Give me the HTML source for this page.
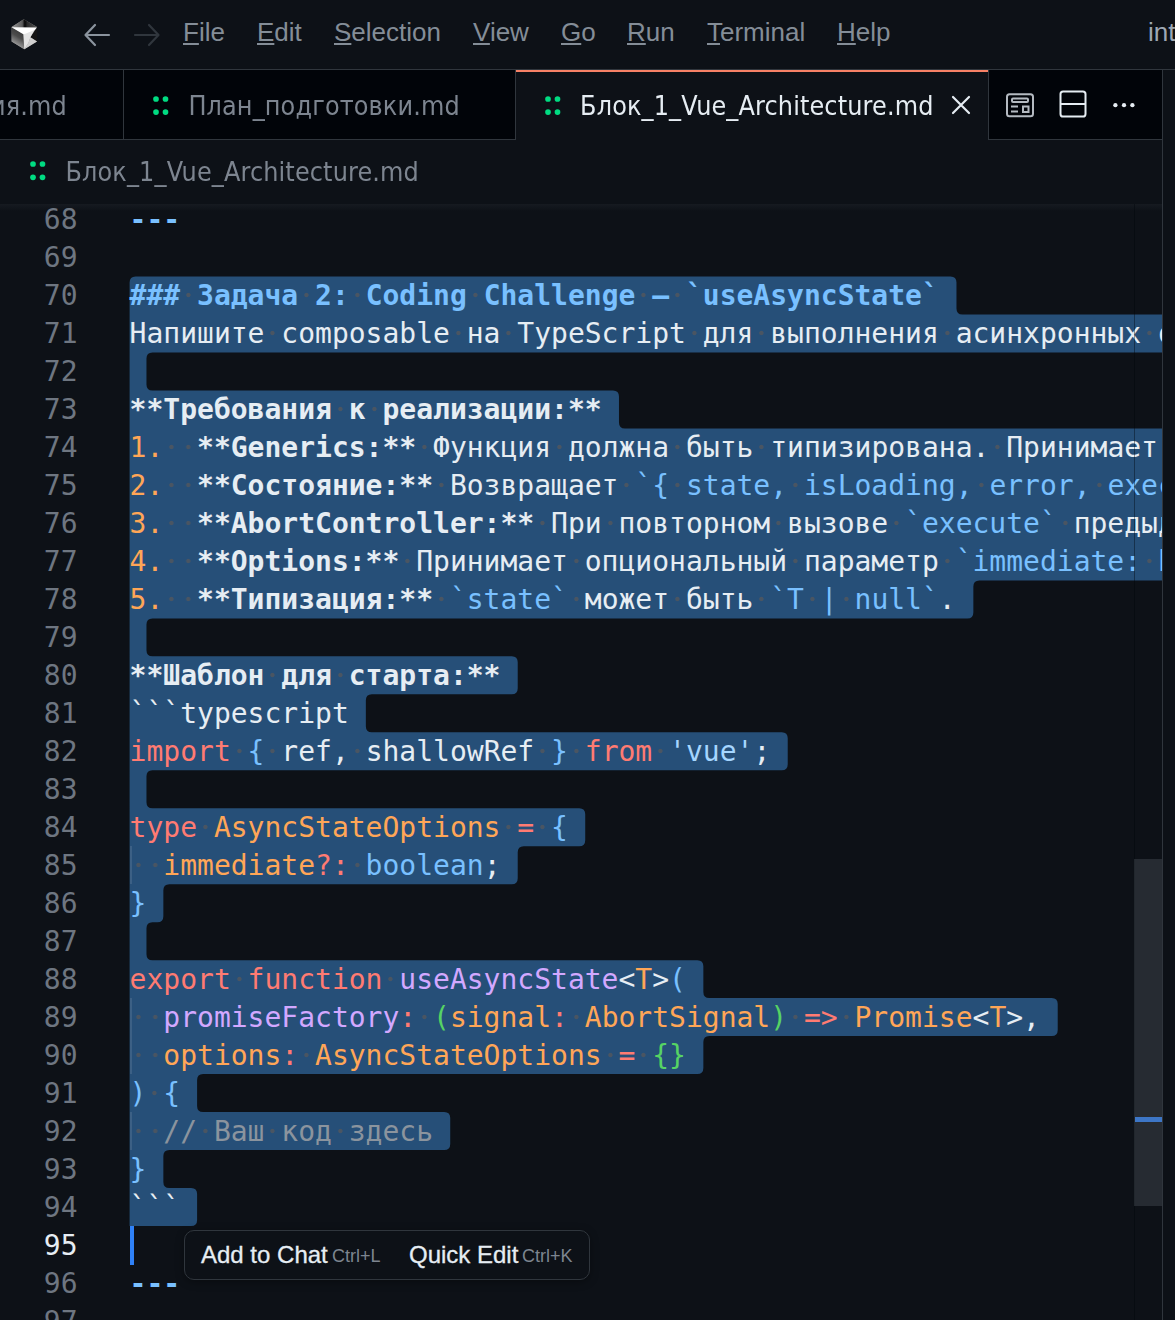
<!DOCTYPE html>
<html lang="ru">
<head>
<meta charset="utf-8">
<title>Блок_1_Vue_Architecture.md</title>
<style>
html,body{margin:0;padding:0;background:#0d1117;}
body{width:1175px;height:1320px;overflow:hidden;position:relative;font-family:"Liberation Sans",sans-serif;color:#e6edf3;}
.abs{position:absolute;}
#title{left:0;top:0;width:1175px;height:69px;background:#0d1117;border-bottom:1px solid #30363d;}
.menu{position:absolute;top:15px;font-size:26px;line-height:34px;color:#848d97;white-space:nowrap;}
.menu u{text-decoration-thickness:1.5px;text-underline-offset:1.5px;}
#tabs{left:0;top:70px;width:1162px;height:69px;background:#010409;border-bottom:1px solid #30363d;}
.tab{position:absolute;top:0;height:69px;border-right:1px solid #30363d;box-sizing:content-box;}
.tabtxt{position:absolute;top:19.5px;letter-spacing:0.125px;transform:scaleY(1.07);transform-origin:0 25.3px;font-family:"DejaVu Sans","Liberation Sans",sans-serif;font-size:24px;line-height:34px;white-space:nowrap;color:#7d8590;}
.dots{position:absolute;width:20px;height:24px;}
#crumbs{left:0;top:140px;width:1162px;height:64px;background:#0d1117;}
#editor{left:0;top:204px;width:1162px;height:1116px;background:#0d1117;overflow:hidden;}
#lines{position:absolute;left:0;top:-204px;width:1400px;height:1400px;}
.ln,.cl{position:absolute;height:38px;line-height:38px;font-family:"DejaVu Sans Mono","Liberation Mono",monospace;font-size:28px;white-space:pre;}
.ln{left:0;width:77.5px;text-align:right;color:#6e7681;}
.ln.act{color:#e6edf3;}
.cl{left:129.6px;color:#e6edf3;}
.b{font-weight:bold;}
.ws{background:radial-gradient(circle closest-side,#4a5562 0,#4a5562 1.7px,rgba(74,85,98,0) 2.6px) 0 calc(50% - .4px)/16.859375px 8px repeat-x;}
.ig{position:absolute;left:129.7px;width:2.2px;background:rgba(255,255,255,.1);}
#right{left:1162px;top:70px;width:13px;height:1250px;background:#0d1117;border-left:1px solid #30363d;box-sizing:border-box;}
#widget{left:184px;top:1230px;width:406px;height:50px;box-sizing:border-box;border:1px solid #30363d;border-radius:10px;background:#0d1117;box-shadow:0 2px 8px rgba(0,0,0,.35);}
#widget span{position:absolute;white-space:nowrap;}
.wa{font-size:24px;line-height:28px;top:10px;color:#e6edf3;-webkit-text-stroke:0.3px #e6edf3;}
.wk{font-size:18px;line-height:22px;top:14px;color:#7d8590;}
</style>
</head>
<body>
<div id="title" class="abs">
  <svg class="abs" style="left:5px;top:12px;filter:blur(.35px)" width="40" height="44" viewBox="0 0 40 44">
    <defs>
      <linearGradient id="lgT" x1="0" y1="0" x2="1" y2="0"><stop offset="0" stop-color="#9a9a9a"/><stop offset=".42" stop-color="#5a5a5a"/><stop offset=".52" stop-color="#050505"/><stop offset=".62" stop-color="#2a2a2a"/><stop offset="1" stop-color="#555"/></linearGradient>
      <linearGradient id="lgL" x1=".7" y1="0" x2=".35" y2="1"><stop offset="0" stop-color="#333"/><stop offset=".45" stop-color="#4c4c4c"/><stop offset=".75" stop-color="#8a8a8a"/><stop offset="1" stop-color="#d0d0d0"/></linearGradient>
    </defs>
    <polygon points="18.72,7.32 32.00,14.98 32.00,29.45 19.30,37.28 6.64,29.45 6.64,14.98" fill="#8c8c8c"/>
    <polygon points="18.72,7.32 32.00,14.98 31.66,16.00 6.98,15.66 6.64,14.98" fill="url(#lgT)"/>
    <polygon points="6.64,15.15 18.55,21.96 19.30,37.28 6.64,29.45" fill="url(#lgL)"/>
    <polygon points="32.00,14.98 32.00,29.45 25.36,25.36" fill="#141414"/>
    <polygon points="32.00,29.45 19.30,37.28 23.49,30.64 25.36,25.36" fill="#cfcfcf"/>
    <polygon points="18.38,21.79 20.77,20.43 30.64,16.34 25.36,25.36 23.49,30.64 19.30,37.28" fill="#e4e4e4"/>
    <polygon points="6.64,15.15 31.83,15.49 29.96,17.70 20.43,21.79 18.38,22.13" fill="#ffffff"/>
  </svg>
  <svg class="abs" style="left:82px;top:22px" width="30" height="26" viewBox="0 0 30 26" fill="none" stroke="#8b949e" stroke-width="2.2" stroke-linecap="round" stroke-linejoin="round"><path d="M27 13H4M13 3L3.5 13L13 23"/></svg>
  <svg class="abs" style="left:132px;top:22px" width="30" height="26" viewBox="0 0 30 26" fill="none" stroke="#30363d" stroke-width="2.2" stroke-linecap="round" stroke-linejoin="round"><path d="M3 13H26M17 3L26.5 13L17 23"/></svg>
  <div class="menu" style="left:183px"><u>F</u>ile</div>
  <div class="menu" style="left:257px"><u>E</u>dit</div>
  <div class="menu" style="left:334px"><u>S</u>election</div>
  <div class="menu" style="left:473px"><u>V</u>iew</div>
  <div class="menu" style="left:561px"><u>G</u>o</div>
  <div class="menu" style="left:627px"><u>R</u>un</div>
  <div class="menu" style="left:707px"><u>T</u>erminal</div>
  <div class="menu" style="left:837px"><u>H</u>elp</div>
  <div class="menu" style="left:1148px;color:#9da7b3">interview</div>
</div>

<div id="tabs" class="abs">
  <div class="tab" style="left:0;width:123px"><div class="tabtxt" style="left:-10px">ия.md</div></div>
  <div class="tab" style="left:124px;width:391px">
    <svg class="dots" style="left:27.5px;top:25.1px" viewBox="0 0 20 24" fill="#00dc82"><circle cx="4" cy="4" r="2.85"/><circle cx="13.5" cy="4" r="2.85"/><circle cx="4" cy="17.1" r="2.85"/><circle cx="13.5" cy="17.1" r="2.85"/></svg>
    <div class="tabtxt" style="left:64.4px">План_подготовки.md</div>
  </div>
  <div class="tab" style="left:516px;width:472px;height:70px;background:#0d1117;box-shadow:inset 0 2px 0 #f78166">
    <svg class="dots" style="left:27.7px;top:25.1px" viewBox="0 0 20 24" fill="#00dc82"><circle cx="4" cy="4" r="2.85"/><circle cx="13.5" cy="4" r="2.85"/><circle cx="4" cy="17.1" r="2.85"/><circle cx="13.5" cy="17.1" r="2.85"/></svg>
    <div class="tabtxt" style="left:64.1px;color:#e6edf3">Блок_1_Vue_Architecture.md</div>
    <svg class="abs" style="left:434px;top:24px" width="22" height="22" viewBox="0 0 22 22" fill="none" stroke="#e6edf3" stroke-width="2.2" stroke-linecap="round"><path d="M3 3L19 19M19 3L3 19"/></svg>
  </div>
  <!-- editor actions -->
  <svg class="abs" style="left:1005px;top:21px" width="30" height="28" viewBox="0 0 30 28" fill="none" stroke="#b4bac1" stroke-width="2"><rect x="2" y="3.2" width="26" height="22" rx="2.5"/><rect x="7" y="7.5" width="16" height="3.5" rx="1"/><path d="M6 15.5h7M6 20.5h7"/><rect x="18" y="15.5" width="5.5" height="5.5"/></svg>
  <svg class="abs" style="left:1058px;top:19px" width="30" height="30" viewBox="0 0 30 30" fill="none" stroke="#e6edf3" stroke-width="2"><rect x="2.5" y="2.5" width="25" height="25" rx="2.6"/><path d="M2.5 15h25"/></svg>
  <svg class="abs" style="left:1110px;top:30px" width="28" height="10" viewBox="0 0 28 10" fill="#e6edf3"><circle cx="5.4" cy="5.2" r="2.15"/><circle cx="14" cy="5.2" r="2.15"/><circle cx="22.4" cy="5.2" r="2.15"/></svg>
</div>

<div id="crumbs" class="abs">
  <svg class="dots" style="left:29.2px;top:20.4px" viewBox="0 0 20 24" fill="#00dc82"><circle cx="4" cy="4" r="2.85"/><circle cx="13.5" cy="4" r="2.85"/><circle cx="4" cy="17.3" r="2.85"/><circle cx="13.5" cy="17.3" r="2.85"/></svg>
  <div class="tabtxt" style="left:65.5px;top:15.7px">Блок_1_Vue_Architecture.md</div>
</div>

<div id="editor" class="abs">
  <div id="lines">
    <svg class="abs" style="left:0;top:0" width="1400" height="1400"><path d="M129.60 282.60 Q129.60 276.60 135.60 276.60 L950.48 276.60 Q956.48 276.60 956.48 282.60 L956.48 308.58 Q956.48 314.58 962.48 314.58 L1304.85 314.58 Q1310.85 314.58 1310.85 320.58 L1310.85 346.55 Q1310.85 352.55 1304.85 352.55 L152.47 352.55 Q146.47 352.55 146.47 358.55 L146.47 384.53 Q146.47 390.53 152.47 390.53 L612.98 390.53 Q618.98 390.53 618.98 396.53 L618.98 422.50 Q618.98 428.50 624.98 428.50 L1304.85 428.50 Q1310.85 428.50 1310.85 434.50 L1310.85 460.48 Q1310.85 466.48 1304.85 466.48 L1299.97 466.48 Q1293.97 466.48 1293.97 472.48 L1293.97 498.45 Q1293.97 504.45 1287.97 504.45 L1266.22 504.45 Q1260.22 504.45 1260.22 510.45 L1260.22 536.42 Q1260.22 542.42 1266.22 542.42 L1304.85 542.42 Q1310.85 542.42 1310.85 548.42 L1310.85 574.40 Q1310.85 580.40 1304.85 580.40 L979.35 580.40 Q973.35 580.40 973.35 586.40 L973.35 612.38 Q973.35 618.38 967.35 618.38 L152.47 618.38 Q146.47 618.38 146.47 624.38 L146.47 650.35 Q146.47 656.35 152.47 656.35 L511.73 656.35 Q517.73 656.35 517.73 662.35 L517.73 688.33 Q517.73 694.33 511.73 694.33 L371.85 694.33 Q365.85 694.33 365.85 700.33 L365.85 726.30 Q365.85 732.30 371.85 732.30 L781.73 732.30 Q787.73 732.30 787.73 738.30 L787.73 764.28 Q787.73 770.28 781.73 770.28 L152.47 770.28 Q146.47 770.28 146.47 776.28 L146.47 802.25 Q146.47 808.25 152.47 808.25 L579.23 808.25 Q585.23 808.25 585.23 814.25 L585.23 840.23 Q585.23 846.23 579.23 846.23 L523.73 846.23 Q517.73 846.23 517.73 852.23 L517.73 878.20 Q517.73 884.20 511.73 884.20 L169.35 884.20 Q163.35 884.20 163.35 890.20 L163.35 916.18 Q163.35 922.18 157.35 922.18 L152.47 922.18 Q146.47 922.18 146.47 928.18 L146.47 954.15 Q146.47 960.15 152.47 960.15 L697.35 960.15 Q703.35 960.15 703.35 966.15 L703.35 992.12 Q703.35 998.12 709.35 998.12 L1051.72 998.12 Q1057.72 998.12 1057.72 1004.12 L1057.72 1030.10 Q1057.72 1036.10 1051.72 1036.10 L709.35 1036.10 Q703.35 1036.10 703.35 1042.10 L703.35 1068.08 Q703.35 1074.08 697.35 1074.08 L203.10 1074.08 Q197.10 1074.08 197.10 1080.08 L197.10 1106.05 Q197.10 1112.05 203.10 1112.05 L444.23 1112.05 Q450.23 1112.05 450.23 1118.05 L450.23 1144.03 Q450.23 1150.03 444.23 1150.03 L169.35 1150.03 Q163.35 1150.03 163.35 1156.03 L163.35 1182.00 Q163.35 1188.00 169.35 1188.00 L191.10 1188.00 Q197.10 1188.00 197.10 1194.00 L197.10 1219.97 Q197.10 1225.97 191.10 1225.97 L129.60 1225.97 Z" fill="#264f78"/></svg>
<div class="ln" style="top:201.0px">68</div>
<div class="cl" style="top:201.0px"><span class="b" style="color:#79c0ff">---</span></div>
<div class="ln" style="top:239.0px">69</div>
<div class="ln" style="top:277.0px">70</div>
<div class="cl" style="top:277.0px"><span class="b" style="color:#79c0ff">###</span><span class="ws"> </span><span class="b" style="color:#79c0ff">Задача</span><span class="ws"> </span><span class="b" style="color:#79c0ff">2:</span><span class="ws"> </span><span class="b" style="color:#79c0ff">Coding</span><span class="ws"> </span><span class="b" style="color:#79c0ff">Challenge</span><span class="ws"> </span><span class="b" style="color:#79c0ff">—</span><span class="ws"> </span><span class="b" style="color:#79c0ff">`useAsyncState`</span></div>
<div class="ln" style="top:315.0px">71</div>
<div class="cl" style="top:315.0px">Напишите<span class="ws"> </span>composable<span class="ws"> </span>на<span class="ws"> </span>TypeScript<span class="ws"> </span>для<span class="ws"> </span>выполнения<span class="ws"> </span>асинхронных<span class="ws"> </span>операций</div>
<div class="ln" style="top:353.0px">72</div>
<div class="ln" style="top:391.0px">73</div>
<div class="cl" style="top:391.0px"><span class="b">**Требования</span><span class="ws"> </span><span class="b">к</span><span class="ws"> </span><span class="b">реализации:**</span></div>
<div class="ln" style="top:429.0px">74</div>
<div class="cl" style="top:429.0px"><span style="color:#ffa657">1.</span><span class="ws">  </span><span class="b">**Generics:**</span><span class="ws"> </span>Функция<span class="ws"> </span>должна<span class="ws"> </span>быть<span class="ws"> </span>типизирована.<span class="ws"> </span>Принимает<span class="ws"> </span>функцию</div>
<div class="ln" style="top:467.0px">75</div>
<div class="cl" style="top:467.0px"><span style="color:#ffa657">2.</span><span class="ws">  </span><span class="b">**Состояние:**</span><span class="ws"> </span>Возвращает<span class="ws"> </span><span style="color:#79c0ff">`{</span><span class="ws"> </span><span style="color:#79c0ff">state,</span><span class="ws"> </span><span style="color:#79c0ff">isLoading,</span><span class="ws"> </span><span style="color:#79c0ff">error,</span><span class="ws"> </span><span style="color:#79c0ff">execute</span><span class="ws"> </span><span style="color:#79c0ff">}`</span></div>
<div class="ln" style="top:505.0px">76</div>
<div class="cl" style="top:505.0px"><span style="color:#ffa657">3.</span><span class="ws">  </span><span class="b">**AbortController:**</span><span class="ws"> </span>При<span class="ws"> </span>повторном<span class="ws"> </span>вызове<span class="ws"> </span><span style="color:#79c0ff">`execute`</span><span class="ws"> </span>предыдущий</div>
<div class="ln" style="top:543.0px">77</div>
<div class="cl" style="top:543.0px"><span style="color:#ffa657">4.</span><span class="ws">  </span><span class="b">**Options:**</span><span class="ws"> </span>Принимает<span class="ws"> </span>опциональный<span class="ws"> </span>параметр<span class="ws"> </span><span style="color:#79c0ff">`immediate:</span><span class="ws"> </span><span style="color:#79c0ff">boolean`</span></div>
<div class="ln" style="top:581.0px">78</div>
<div class="cl" style="top:581.0px"><span style="color:#ffa657">5.</span><span class="ws">  </span><span class="b">**Типизация:**</span><span class="ws"> </span><span style="color:#79c0ff">`state`</span><span class="ws"> </span>может<span class="ws"> </span>быть<span class="ws"> </span><span style="color:#79c0ff">`T</span><span class="ws"> </span><span style="color:#79c0ff">|</span><span class="ws"> </span><span style="color:#79c0ff">null`</span>.</div>
<div class="ln" style="top:619.0px">79</div>
<div class="ln" style="top:657.0px">80</div>
<div class="cl" style="top:657.0px"><span class="b">**Шаблон</span><span class="ws"> </span><span class="b">для</span><span class="ws"> </span><span class="b">старта:**</span></div>
<div class="ln" style="top:695.0px">81</div>
<div class="cl" style="top:695.0px">```typescript</div>
<div class="ln" style="top:733.0px">82</div>
<div class="cl" style="top:733.0px"><span style="color:#ff7b72">import</span><span class="ws"> </span><span style="color:#79c0ff">{</span><span class="ws"> </span>ref,<span class="ws"> </span>shallowRef<span class="ws"> </span><span style="color:#79c0ff">}</span><span class="ws"> </span><span style="color:#ff7b72">from</span><span class="ws"> </span><span style="color:#a5d6ff">'vue'</span>;</div>
<div class="ln" style="top:771.0px">83</div>
<div class="ln" style="top:809.0px">84</div>
<div class="cl" style="top:809.0px"><span style="color:#ff7b72">type</span><span class="ws"> </span><span style="color:#ffa657">AsyncStateOptions</span><span class="ws"> </span><span style="color:#ff7b72">=</span><span class="ws"> </span><span style="color:#79c0ff">{</span></div>
<div class="ln" style="top:847.0px">85</div>
<div class="cl" style="top:847.0px"><span class="ws">  </span><span style="color:#ffa657">immediate</span><span style="color:#ff7b72">?:</span><span class="ws"> </span><span style="color:#79c0ff">boolean</span>;</div>
<div class="ln" style="top:885.0px">86</div>
<div class="cl" style="top:885.0px"><span style="color:#79c0ff">}</span></div>
<div class="ln" style="top:923.0px">87</div>
<div class="ln" style="top:961.0px">88</div>
<div class="cl" style="top:961.0px"><span style="color:#ff7b72">export</span><span class="ws"> </span><span style="color:#ff7b72">function</span><span class="ws"> </span><span style="color:#d2a8ff">useAsyncState</span>&lt;<span style="color:#ffa657">T</span>&gt;<span style="color:#79c0ff">(</span></div>
<div class="ln" style="top:999.0px">89</div>
<div class="cl" style="top:999.0px"><span class="ws">  </span><span style="color:#d2a8ff">promiseFactory</span><span style="color:#ff7b72">:</span><span class="ws"> </span><span style="color:#56d364">(</span><span style="color:#ffa657">signal</span><span style="color:#ff7b72">:</span><span class="ws"> </span><span style="color:#ffa657">AbortSignal</span><span style="color:#56d364">)</span><span class="ws"> </span><span style="color:#ff7b72">=&gt;</span><span class="ws"> </span><span style="color:#ffa657">Promise</span>&lt;<span style="color:#ffa657">T</span>&gt;,</div>
<div class="ln" style="top:1037.0px">90</div>
<div class="cl" style="top:1037.0px"><span class="ws">  </span><span style="color:#ffa657">options</span><span style="color:#ff7b72">:</span><span class="ws"> </span><span style="color:#ffa657">AsyncStateOptions</span><span class="ws"> </span><span style="color:#ff7b72">=</span><span class="ws"> </span><span style="color:#56d364">{}</span></div>
<div class="ln" style="top:1075.0px">91</div>
<div class="cl" style="top:1075.0px"><span style="color:#79c0ff">)</span><span class="ws"> </span><span style="color:#79c0ff">{</span></div>
<div class="ln" style="top:1113.0px">92</div>
<div class="cl" style="top:1113.0px"><span class="ws">  </span><span style="color:#8b949e">//</span><span class="ws"> </span><span style="color:#8b949e">Ваш</span><span class="ws"> </span><span style="color:#8b949e">код</span><span class="ws"> </span><span style="color:#8b949e">здесь</span></div>
<div class="ln" style="top:1151.0px">93</div>
<div class="cl" style="top:1151.0px"><span style="color:#79c0ff">}</span></div>
<div class="ln" style="top:1189.0px">94</div>
<div class="cl" style="top:1189.0px">```</div>
<div class="ln act" style="top:1227.0px">95</div>
<div class="ln" style="top:1265.0px">96</div>
<div class="cl" style="top:1265.0px"><span class="b" style="color:#79c0ff">---</span></div>
<div class="ln" style="top:1303.0px">97</div>
<div class="ig" style="top:846.23px;height:37.98px"></div>
<div class="ig" style="top:998.12px;height:75.95px"></div>
<div class="ig" style="top:1112.05px;height:37.97px"></div>
    <div class="abs" style="left:129.6px;top:1226px;width:4px;height:38.5px;background:#2f81f7"></div>
  </div>
  <!-- scroll shadow -->
  <div class="abs" style="left:0;top:0;width:1162px;height:7px;background:linear-gradient(rgba(110,118,129,.09),rgba(110,118,129,0))"></div>
  <!-- scrollbar / overview ruler -->
  <div class="abs" style="left:1134px;top:0;width:28px;height:1116px;border-left:1px solid rgba(1,4,9,.4);box-sizing:border-box"></div>
  <div class="abs" style="left:1134px;top:655px;width:28px;height:347px;background:rgba(139,148,158,.2)"></div>
  <div class="abs" style="left:1135px;top:913px;width:27px;height:5px;background:#3d76c6"></div>
</div>

<div id="right" class="abs"></div>

<div id="widget" class="abs">
  <span class="wa" style="left:16px">Add to Chat</span><span class="wk" style="left:147px">Ctrl+L</span>
  <span class="wa" style="left:224px">Quick Edit</span><span class="wk" style="left:337px">Ctrl+K</span>
</div>
</body>
</html>
